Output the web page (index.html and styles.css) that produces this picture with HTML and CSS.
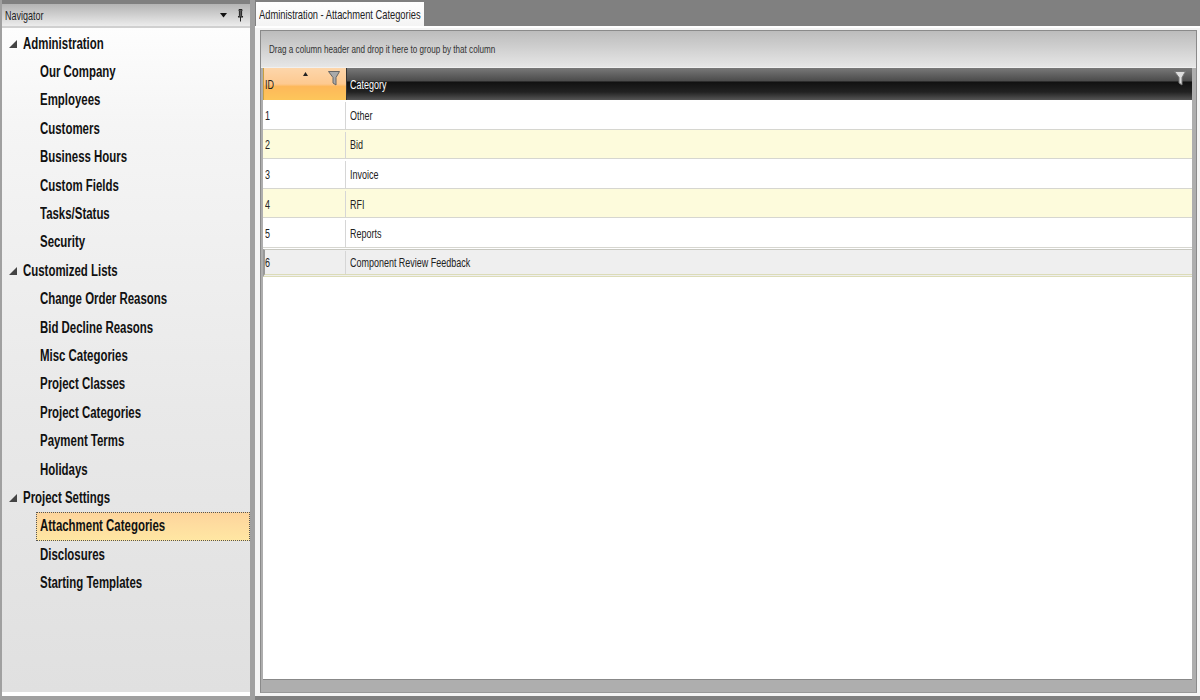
FILE: index.html
```html
<!DOCTYPE html>
<html lang="en">
<head>
<meta charset="utf-8">
<title>Administration - Attachment Categories</title>
<link rel="stylesheet" href="styles.css">
</head>
<body>
<div class="shell">
  <aside class="nav">
    <header class="nav-head">
      <span class="t nav-title">Navigator</span>
      <span class="nav-tools">
        <svg width="8" height="5" viewBox="0 0 8 5"><path d="M0 0h7L3.500 4.500z" fill="#111"/></svg>
        <svg width="7" height="13" viewBox="0 0 7 13"><path d="M2 0.500h3v1L4.600 2v4.500L6 8H1l1.400-1.500V2L2 1.500zM3.500 8v4.500" fill="#555" stroke="#222" stroke-width="1"/></svg>
      </span>
    </header>
    <div class="tree">
      <div class="group"><svg class="caret" width="10" height="10" viewBox="0 0 10 10"><path d="M9 1v8H1z" fill="#444"/></svg><span class="t">Administration</span></div>
      <div class="item"><span class="t">Our Company</span></div>
      <div class="item"><span class="t">Employees</span></div>
      <div class="item"><span class="t">Customers</span></div>
      <div class="item"><span class="t">Business Hours</span></div>
      <div class="item"><span class="t">Custom Fields</span></div>
      <div class="item"><span class="t">Tasks/Status</span></div>
      <div class="item"><span class="t">Security</span></div>
      <div class="group"><svg class="caret" width="10" height="10" viewBox="0 0 10 10"><path d="M9 1v8H1z" fill="#444"/></svg><span class="t">Customized Lists</span></div>
      <div class="item"><span class="t">Change Order Reasons</span></div>
      <div class="item"><span class="t">Bid Decline Reasons</span></div>
      <div class="item"><span class="t">Misc Categories</span></div>
      <div class="item"><span class="t">Project Classes</span></div>
      <div class="item"><span class="t">Project Categories</span></div>
      <div class="item"><span class="t">Payment Terms</span></div>
      <div class="item"><span class="t">Holidays</span></div>
      <div class="group"><svg class="caret" width="10" height="10" viewBox="0 0 10 10"><path d="M9 1v8H1z" fill="#444"/></svg><span class="t">Project Settings</span></div>
      <div class="item selected"><span class="t">Attachment Categories</span></div>
      <div class="item"><span class="t">Disclosures</span></div>
      <div class="item"><span class="t">Starting Templates</span></div>
    </div>
  </aside>
  <main class="main">
    <div class="tabs"><div class="tab"><span class="t">Administration - Attachment Categories</span></div></div>
    <section class="page">
      <div class="grid">
        <div class="group-panel"><span class="t">Drag a column header and drop it here to group by that column</span></div>
        <div class="grid-body">
          <div class="head">
            <div class="hcell hid"><span class="t">ID</span>
              <svg class="sort" width="5" height="4" viewBox="0 0 5 4"><path d="M2.500 0L5 4H0z" fill="#222"/></svg>
              <svg class="filter" width="12" height="15" viewBox="0 0 12 15"><path d="M0.500 0.500h11L8 6.500V14l-3-2V6.500z" fill="#aaa" stroke="#666"/></svg>
            </div>
            <div class="hcell hcat"><span class="t">Category</span>
              <svg class="filter" width="12" height="15" viewBox="0 0 12 15"><path d="M0.500 0.500h11L8 6.500V14l-3-2V6.500z" fill="#ddd" stroke="#777"/></svg>
            </div>
          </div>
          <div class="row"><div class="cid"><span class="t">1</span></div><div class="ccat"><span class="t">Other</span></div></div>
          <div class="row alt"><div class="cid"><span class="t">2</span></div><div class="ccat"><span class="t">Bid</span></div></div>
          <div class="row"><div class="cid"><span class="t">3</span></div><div class="ccat"><span class="t">Invoice</span></div></div>
          <div class="row alt"><div class="cid"><span class="t">4</span></div><div class="ccat"><span class="t">RFI</span></div></div>
          <div class="row"><div class="cid"><span class="t">5</span></div><div class="ccat"><span class="t">Reports</span></div></div>
          <div class="row current"><div class="cid"><span class="t">6</span></div><div class="ccat"><span class="t">Component Review Feedback</span></div></div>
        </div>
        <div class="grid-foot"></div>
      </div>
    </section>
  </main>
</div>
</body>
</html>
```
FILE: styles.css
```css
* { box-sizing: border-box; }
html, body { margin: 0; height: 100%; }
body {
  background: linear-gradient(90deg, #a0a0a0 0, #a0a0a0 255px, #808080 255px);
  font-family: "Liberation Sans", Arial, sans-serif;
  color: #111;
  overflow: hidden;
}
.t {
  display: inline-block;
  white-space: nowrap;
  transform: scaleX(0.69);
  transform-origin: left center;
}
.shell { display: flex; height: 700px; padding: 2px 0 4px 2px; gap: 5px; }

.nav {
  width: 248px;
  margin-top: 2px;
  display: flex;
  flex-direction: column;
  border-bottom: 4px solid #fff;
  background: linear-gradient(#ffffff 0, #f5f5f5 120px, #e9e9e9 400px, #e0e0e0 100%);
  box-shadow: 0 -4px 0 #808080;
}
.nav-head {
  height: 24px;
  flex: none;
  display: flex;
  align-items: center;
  justify-content: space-between;
  padding: 0 6px 0 3px;
  background: linear-gradient(#b4b4b4, #ececec);
  border-bottom: 2px solid #d0d0d0;
  font-size: 13px;
  color: #222;
}
.nav-tools { display: flex; align-items: center; gap: 9px; }
.tree { padding-top: 1.500px; font-size: 16px; font-weight: bold; }
.tree .t { transform: scaleX(0.715); }
.group, .item { height: 28.4px; display: flex; align-items: center; }
.group { padding-left: 6px; }
.caret { margin-right: 5px; }
.item { padding-left: 38px; }
.item.selected {
  margin-left: 34px;
  padding-left: 4px;
  background: linear-gradient(#fdd49c, #ffe7a3);
  outline: 1px dotted #555;
  outline-offset: -1px;
}

.main { flex: 1; min-width: 0; display: flex; flex-direction: column; }
.tabs { height: 24px; flex: none; padding-left: 1px; }
.tab {
  display: flex;
  align-items: center;
  height: 24px;
  width: 168px;
  padding-left: 3px;
  background: linear-gradient(#ffffff, #f4f4f4);
  font-size: 13.500px;
  color: #222;
}
.page { flex: 1; background: #f4f4f4; border-top: 2px solid #fff; padding: 2px 3px 3px 5px; }
.grid {
  height: 100%;
  display: flex;
  flex-direction: column;
  background: #aeaeae;
  border: 1px solid #8a8a8a;
  border-bottom-color: #999;
}
.group-panel {
  height: 37px;
  flex: none;
  display: flex;
  align-items: center;
  padding-left: 8px;
  background: linear-gradient(#bcbcbc, #e6e6e6);
  border-bottom: 1px solid #f0f0f0;
  font-size: 11.500px;
  color: #333;
}
.group-panel .t { transform: scaleX(0.705); }
.grid-body { flex: 1; margin: 0 4px 0 2px; background: #fff; border-bottom: 1px solid #888; }
.head { display: flex; height: 32px; }
.hcell { position: relative; display: flex; align-items: center; font-size: 13px; }
.hid {
  width: 83px;
  padding-left: 1px;
  color: #222;
  background: linear-gradient(#fdd6ab 0, #fdc990 50%, #fdb85a 58%, #fdc65a 100%);
  border-left: 1px solid #c8a040;
}
.hcat {
  flex: 1;
  padding-left: 3px;
  color: #fff;
  background: linear-gradient(#787878 0, #4c4c4c 40%, #111 44%, #222 75%, #555 100%);
  border-left: 1px solid #333;
}
.sort { position: absolute; left: 39px; top: 4px; }
.filter { position: absolute; right: 6px; top: 3px; }
.row { display: flex; height: 29.600px; padding-top: 2px; border-bottom: 1px solid #d6d6d0; font-size: 13px; color: #222; background: #fff; }
.row.alt { background: #fdfbdc; }
.row.current { background: #efefef; margin-top: 1px; border-top: 1px solid #c8c8c0; border-left: 2px solid #999; border-bottom: 3px double #dcdcb8; height: 28.500px; padding-top: 1px; }
.cid { width: 83px; padding-left: 2px; display: flex; align-items: center; border-right: 1px solid #d6d6d6; }
.row.current .cid { width: 81px; padding-left: 0; }
.ccat { flex: 1; padding-left: 4px; display: flex; align-items: center; }
.grid-foot { height: 12px; flex: none; }
```
